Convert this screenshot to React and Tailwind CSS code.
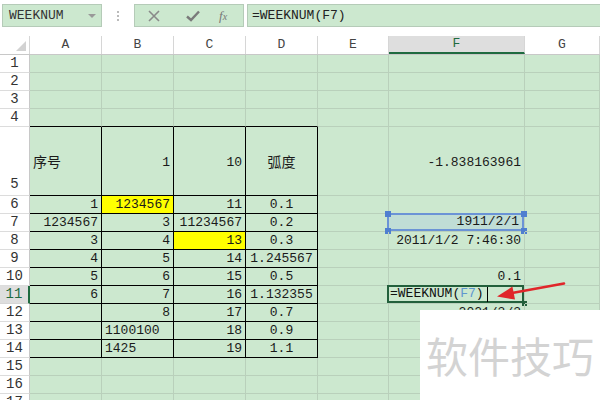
import React from "react";

const COLS = [
  { k: "A", w: "w-[72px]" },
  { k: "B", w: "w-[72px]" },
  { k: "C", w: "w-[72px]" },
  { k: "D", w: "w-[72px]" },
  { k: "E", w: "w-[71px]" },
  { k: "F", w: "w-[136px]" },
  { k: "G", w: "w-[75px]" },
];

const ROWS = Array.from({ length: 17 }, (_, i) => i + 1);

const ALIGN = {
  r: "justify-end pr-[3px]",
  l: "justify-start pl-[3px]",
  c: "justify-center",
};

// cell contents: t = text, a = align, y = yellow fill, cjk = chinese text
const DATA = {
  A5: { t: "序号", a: "l", cjk: true },
  B5: { t: "1", a: "r" },
  C5: { t: "10", a: "r" },
  D5: { t: "弧度", a: "c", cjk: true },
  F5: { t: "-1.838163961", a: "r" },
  A6: { t: "1", a: "r" },
  B6: { t: "1234567", a: "r", y: true },
  C6: { t: "11", a: "r" },
  D6: { t: "0.1", a: "c" },
  A7: { t: "1234567", a: "r" },
  B7: { t: "3", a: "r" },
  C7: { t: "11234567", a: "r" },
  D7: { t: "0.2", a: "c" },
  A8: { t: "3", a: "r" },
  B8: { t: "4", a: "r" },
  C8: { t: "13", a: "r", y: true },
  D8: { t: "0.3", a: "c" },
  F8: { t: "2011/1/2 7:46:30", a: "r" },
  A9: { t: "4", a: "r" },
  B9: { t: "5", a: "r" },
  C9: { t: "14", a: "r" },
  D9: { t: "1.245567", a: "c" },
  A10: { t: "5", a: "r" },
  B10: { t: "6", a: "r" },
  C10: { t: "15", a: "r" },
  D10: { t: "0.5", a: "c" },
  F10: { t: "0.1", a: "r" },
  A11: { t: "6", a: "r" },
  B11: { t: "7", a: "r" },
  C11: { t: "16", a: "r" },
  D11: { t: "1.132355", a: "c" },
  B12: { t: "8", a: "r" },
  C12: { t: "17", a: "r" },
  D12: { t: "0.7", a: "c" },
  F12: { t: "2021/3/3", a: "r" },
  B13: { t: "1100100", a: "l" },
  C13: { t: "18", a: "r" },
  D13: { t: "0.9", a: "c" },
  B14: { t: "1425", a: "l" },
  C14: { t: "19", a: "r" },
  D14: { t: "1.1", a: "c" },
};

function Cell({ col, row }) {
  const key = col.k + row;
  const d = DATA[key];
  const tableCol = "ABCD".includes(col.k);
  const rightBlack = tableCol && row >= 5 && row <= 14;
  const bottomBlack = tableCol && row >= 4 && row <= 14;

  return (
    <div
      className={`relative shrink-0 flex items-center ${col.w} border-r border-b ${
        rightBlack ? "border-r-black" : "border-r-[#b9d0bb]"
      } ${bottomBlack ? "border-b-black" : "border-b-[#b9d0bb]"} ${
        d && d.y ? "bg-[#ffff00]" : ""
      } ${d ? ALIGN[d.a] : ""} ${row === 5 ? "pt-[4px]" : ""}`}
    >
      {d && (
        <span
          className={`whitespace-nowrap text-[#1a1a1a] ${
            d.cjk ? "text-[14px]" : "text-[13px]"
          }`}
        >
          {d.t}
        </span>
      )}

      {key === "F7" && (
        <>
          <div className="absolute -left-[2px] -top-[1px] right-0 bottom-0 border-2 border-[#6b93d6] bg-[#c0ddd6] flex items-center justify-end pr-[3px]">
            <span className="text-[13px] text-[#1a1a1a]">1911/2/1</span>
          </div>
          <div className="absolute -left-[4px] -top-[3px] w-[6px] h-[6px] bg-[#4f7fd0]" />
          <div className="absolute -right-[3px] -top-[3px] w-[6px] h-[6px] bg-[#4f7fd0]" />
          <div className="absolute -left-[4px] -bottom-[3px] w-[6px] h-[6px] bg-[#4f7fd0]" />
          <div className="absolute -right-[3px] -bottom-[3px] w-[6px] h-[6px] bg-[#4f7fd0]" />
        </>
      )}

      {key === "F11" && (
        <>
          <div className="absolute -left-[2px] -top-[1px] right-0 bottom-0 border-2 border-[#23603c] bg-[#cce8cf] flex items-center pl-[1px]">
            <span className="text-[13px] text-[#111] whitespace-nowrap">
              =WEEKNUM(<span className="text-[#5f97cf]">F7</span>)
            </span>
            <span className="ml-[3px] w-px h-[15px] bg-black" />
          </div>
          <div className="absolute -right-[3px] -bottom-[3px] w-[5px] h-[5px] bg-[#23603c]" />
        </>
      )}
    </div>
  );
}

export default function App() {
  return (
    <div className="relative w-[600px] h-[400px] overflow-hidden bg-white font-['Liberation_Mono','Noto_Sans_CJK_SC',monospace]">
      {/* toolbar */}
      <div className="h-[36px] flex items-start pt-[4px] pl-[2px] gap-0">
        <div className="w-[100px] h-[23px] flex items-center justify-between pl-[6px] pr-[5px] bg-[#cce8cf] border border-[#b5cbb8]">
          <span className="text-[13px] text-[#333]">WEEKNUM</span>
          <span className="w-0 h-0 border-l-[4px] border-r-[4px] border-t-[4px] border-l-transparent border-r-transparent border-t-[#999]" />
        </div>
        <div className="w-[32px] h-[23px] flex flex-col items-center justify-center gap-[2px]">
          <span className="w-[2px] h-[2px] bg-[#bbb]" />
          <span className="w-[2px] h-[2px] bg-[#bbb]" />
          <span className="w-[2px] h-[2px] bg-[#bbb]" />
        </div>
        <div className="w-[110px] h-[23px] flex items-center bg-[#cce8cf] border border-[#b5cbb8] text-[#7d7d7d]">
          <svg width="12" height="12" viewBox="0 0 12 12" className="ml-[13px]">
            <path d="M1 1L11 11M11 1L1 11" stroke="#8a8a8a" strokeWidth="1.6" />
          </svg>
          <svg width="14" height="12" viewBox="0 0 14 12" className="ml-[26px]">
            <path d="M1 6.5L5 10L13 1.5" fill="none" stroke="#7a7a7a" strokeWidth="2.4" />
          </svg>
          <span className="ml-[19px] italic text-[13px] font-['Liberation_Serif',serif] text-[#777]">
            f<span className="text-[10px]">x</span>
          </span>
        </div>
        <div className="ml-[3px] flex-1 h-[23px] flex items-center pl-[4px] bg-[#cce8cf] border border-[#b5cbb8] border-r-0">
          <span className="text-[13px] text-[#222]">=WEEKNUM(F7)</span>
        </div>
      </div>

      {/* column headers */}
      <div className="flex h-[19px] border-b border-[#c8c8c8]">
        <div className="w-[30px] shrink-0 flex items-end justify-end pr-[3px] pb-[3px] border-r border-[#d6d6d6]">
          <svg width="10" height="10" viewBox="0 0 10 10">
            <polygon points="10,0 10,10 0,10" fill="#d2d2d2" />
          </svg>
        </div>
        {COLS.map((c) =>
          c.k === "F" ? (
            <div
              key={c.k}
              className={`${c.w} shrink-0 flex items-center justify-center bg-[#dedede] border-r border-[#d6d6d6] border-b-2 border-b-[#1f6b40] text-[13px] text-[#1f6b40]`}
            >
              {c.k}
            </div>
          ) : (
            <div
              key={c.k}
              className={`${c.w} shrink-0 flex items-center justify-center border-r border-[#d6d6d6] text-[13px] text-[#444]`}
            >
              {c.k}
            </div>
          )
        )}
      </div>

      {/* rows */}
      {ROWS.map((r) => (
        <div key={r} className={`flex ${r === 5 ? "h-[69px]" : "h-[18px]"}`}>
          {r === 11 ? (
            <div className="w-[30px] shrink-0 flex items-center justify-center bg-[#dedede] border-r-2 border-r-[#1f6b40] border-b border-b-[#d6d6d6] text-[14px] text-[#1f6b40]">
              {r}
            </div>
          ) : (
            <div
              className={`w-[30px] shrink-0 flex justify-center border-r border-r-[#c8c8c8] border-b border-b-[#dcdcdc] text-[14px] text-[#333] ${
                r === 5 ? "items-end" : "items-center"
              }`}
            >
              {r}
            </div>
          )}
          <div className="flex bg-[#cce8cf]">
            {COLS.map((c) => (
              <Cell key={c.k} col={c} row={r} />
            ))}
          </div>
        </div>
      ))}

      {/* red arrow annotation */}
      <svg className="absolute left-[490px] top-[278px]" width="80" height="28" viewBox="490 278 80 28">
        <path d="M564 283.5 L512 293" stroke="#e0262a" strokeWidth="2.6" strokeLinecap="round" />
        <polygon points="497,296.5 512.4,286.6 515,299.6" fill="#e0262a" />
      </svg>

      {/* watermark */}
      <div className="absolute left-[420px] top-[310px] w-[180px] h-[90px] bg-white flex items-center pl-[6px]">
        <span className="text-[42px] leading-none text-[#d3d3d3] font-['Noto_Sans_CJK_SC',sans-serif] whitespace-nowrap">
          软件技巧
        </span>
      </div>
    </div>
  );
}
